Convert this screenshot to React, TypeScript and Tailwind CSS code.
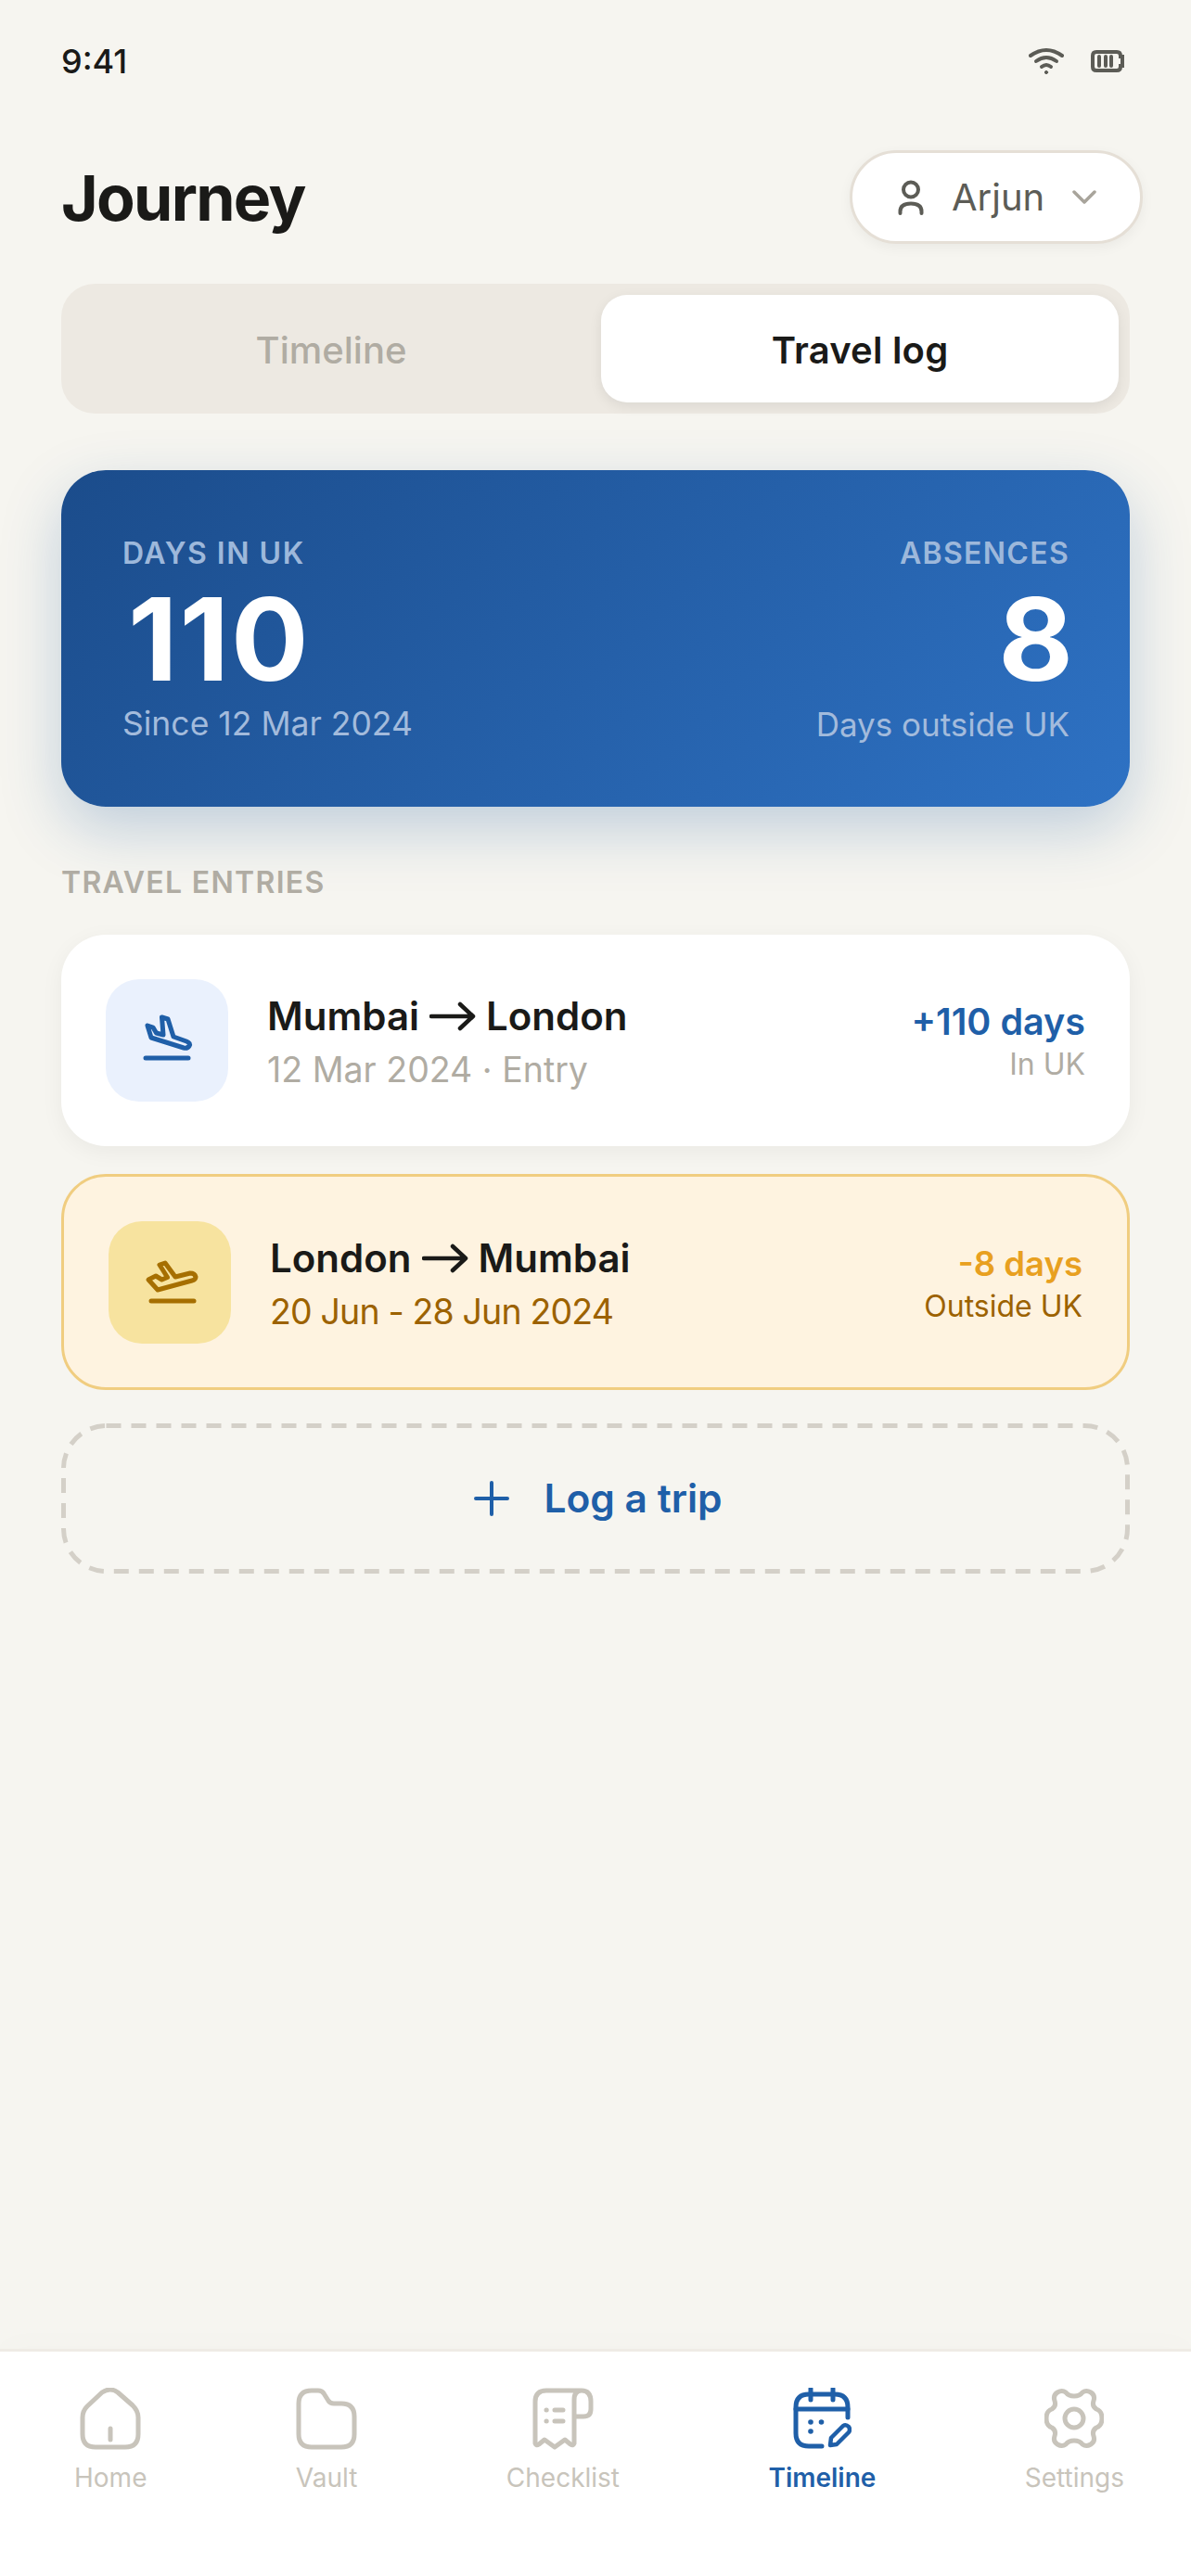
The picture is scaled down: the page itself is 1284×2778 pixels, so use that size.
import React from "react";

const font = { fontFamily: '"Inter", "Liberation Sans", sans-serif' };

function Plane({ color, kind }: { color: string; kind: "land" | "depart" }) {
  return (
    <svg width="80" height="70" viewBox="0 0 80 70" fill="none" stroke={color} strokeWidth="5" strokeLinecap="round" strokeLinejoin="round">
      {kind === "land" ? (
        <>
          <path d="M19 19 L25 21 L28.5 27 L36 29 L34.5 10 L41 12 L47 31 L61 36 Q66 38 64 41 Q62 44 58 43 L23 32 Z" />
          <path d="M17 54 H63" />
        </>
      ) : (
        <>
          <path d="M17 32 L25 28 L31.5 32 L37.5 29.5 L29 16 L35 14 L46 29 L62 25 Q67 25 68 29 Q68 32 64 33 L27 43 Z" />
          <path d="M20 55 H66" />
        </>
      )}
    </svg>
  );
}

function Status() {
  return (
    <div className="flex h-[132px] items-center justify-between pl-[66px] pr-[72px]">
      <span className="text-[36px] font-medium text-[#1a1a18]">9:41</span>
      <div className="flex items-center gap-[29px]">
        <svg width="38" height="30" viewBox="0 0 38 30" fill="none" stroke="#5c5c56" strokeWidth="4" strokeLinecap="round">
          <path d="M2 9 Q19 -3 36 9" />
          <path d="M8 15 Q19 7 30 15" />
          <path d="M14 21 Q19 17 24 21" />
          <circle cx="19" cy="27" r="1.6" fill="#5c5c56" strokeWidth="1" />
        </svg>
        <svg width="36" height="24" viewBox="0 0 36 24" fill="none">
          <path d="M6 2 H28 Q32 2 32 6 V7 H34 V17 H32 V18 Q32 22 28 22 H6 Q2 22 2 18 V6 Q2 2 6 2 Z" stroke="#5c5c56" strokeWidth="4" />
          <path d="M9 7 V17 M16 7 V17 M22 7 V17" stroke="#5c5c56" strokeWidth="4" strokeLinecap="round" />
        </svg>
      </div>
    </div>
  );
}

function Header() {
  return (
    <div className="mt-[30px] flex h-[101px] items-center justify-between pl-[66px] pr-[52px]">
      <h1 className="text-[68px] font-bold tracking-[-1.7px] text-[#1a1a18]">Journey</h1>
      <div className="flex h-[101px] w-[316px] items-center rounded-full border-[3px] border-[#e5dfd6] bg-white pl-[49px] shadow-[0_4px_14px_rgba(0,0,0,0.05)]">
        <svg width="28" height="38" viewBox="0 0 28 38" fill="none" stroke="#5c5c56" strokeWidth="4" strokeLinecap="round">
          <circle cx="14" cy="10.5" r="8" />
          <path d="M2.5 36 V34 Q2.5 25.5 14 25.5 Q25.5 25.5 25.5 34 V36" />
        </svg>
        <span className="ml-[30px] text-[40px] text-[#5c5c56]">Arjun</span>
        <svg width="26" height="16" viewBox="0 0 26 16" fill="none" stroke="#a8a49b" strokeWidth="3.5" strokeLinecap="round" strokeLinejoin="round" className="ml-[30px]">
          <path d="M2 2 L13 13 L24 2" />
        </svg>
      </div>
    </div>
  );
}

function Tabs() {
  return (
    <div className="mx-[66px] mt-[43px] flex h-[140px] items-center rounded-[36px] bg-[#ede9e2] pr-[12px]">
      <div className="flex-1 pt-[3px] text-center text-[40px] font-medium text-[#b0aca3]">Timeline</div>
      <div className="flex h-[116px] w-[558px] items-center justify-center rounded-[28px] bg-white pt-[3px] text-[40px] font-semibold tracking-[0.2px] text-[#1a1a18] shadow-[0_4px_14px_rgba(0,0,0,0.08)]">
        Travel log
      </div>
    </div>
  );
}

function Hero() {
  return (
    <div className="mx-[66px] mt-[61px] flex h-[363px] justify-between rounded-[48px] bg-[linear-gradient(135deg,#1b4c8b_0%,#2e72c4_100%)] pl-[66px] pr-[65px] pt-[70px] shadow-[0_24px_64px_rgba(30,90,160,0.25)]">
      <div className="flex flex-col">
        <span className="text-[32px] leading-[40px] font-semibold tracking-[1.5px] text-[#9db8db]">DAYS IN UK</span>
        <span className="ml-[6px] mt-[12px] text-[124px] leading-[120px] font-bold tracking-[2px] text-white">110</span>
        <span className="mt-[10px] text-[35.5px] leading-[44px] text-[#a3bbdc]">Since 12 Mar 2024</span>
      </div>
      <div className="flex flex-col items-end">
        <span className="text-[32px] leading-[40px] font-semibold tracking-[1.3px] text-[#9db8db]">ABSENCES</span>
        <span className="-mr-[4px] mt-[12px] text-[124px] leading-[120px] font-bold text-white">8</span>
        <span className="mt-[10px] text-[35px] leading-[44px] text-[#a3bbdc]">Days outside UK</span>
      </div>
    </div>
  );
}

function Arrow() {
  return (
    <svg width="50" height="32" viewBox="0 0 50 32" fill="none" stroke="#1a1a18" strokeWidth="4.5" strokeLinecap="round" strokeLinejoin="round" className="mx-[11px]">
      <path d="M2 16 H47 M33 3 L47 16 L33 29" />
    </svg>
  );
}

function Entry({ from, to, sub, value, note, warm, kind }: { from: string; to: string; sub: string; value: string; note: string; warm?: boolean; kind: "land" | "depart" }) {
  return (
    <div
      className={
        warm
          ? "mx-[66px] mt-[30px] flex h-[233px] items-center rounded-[48px] border-[3px] border-[#f0cd80] bg-[#fef3e0] pl-[48px] pr-[48px]"
          : "mx-[66px] flex h-[228px] items-center rounded-[48px] bg-white pl-[48px] pr-[48px] shadow-[0_6px_24px_rgba(0,0,0,0.05)]"
      }
    >
      <div className={warm ? "flex h-[132px] w-[132px] items-center justify-center rounded-[36px] bg-[#f7e39f]" : "flex h-[132px] w-[132px] items-center justify-center rounded-[36px] bg-[#eaf1fd]"}>
        <Plane color={warm ? "#a66f00" : "#1f5fa8"} kind={kind} />
      </div>
      <div className="ml-[42px] flex-1 pt-[4px]">
        <div className="flex items-center text-[42px] leading-[54px] font-semibold text-[#1a1a18]">
          {from}
          <Arrow />
          {to}
        </div>
        <div className={warm ? "mt-[6px] text-[37.5px] leading-[50px] tracking-[-0.85px] text-[#9c6200]" : "mt-[6px] text-[37.5px] leading-[50px] text-[#b0aca3]"}>{sub}</div>
      </div>
      <div className="pt-[3px] text-right">
        <div className={warm ? "text-[36.5px] leading-[48px] font-semibold text-[#e8a020]" : "text-[39.5px] leading-[48px] font-semibold text-[#1f5fa8]"}>{value}</div>
        <div className={warm ? "mt-[1px] text-[32px] leading-[42px] text-[#9c6200]" : "mt-[1px] text-[32px] leading-[42px] text-[#b0aca3]"}>{note}</div>
      </div>
    </div>
  );
}

function LogTrip() {
  return (
    <div className="relative mx-[66px] mt-[36px] flex h-[162px] items-center justify-center gap-[36px] pl-[5px]">
      <svg className="absolute inset-0" width="1152" height="162" viewBox="0 0 1152 162" fill="none">
        <rect x="2.5" y="2.5" width="1147" height="157" rx="46" stroke="#d4d0c8" strokeWidth="5" strokeDasharray="16 11" />
      </svg>
      <svg width="40" height="40" viewBox="0 0 40 40" fill="none" stroke="#1f5fa8" strokeWidth="4" strokeLinecap="round">
        <path d="M20 3 V37 M3 20 H37" />
      </svg>
      <span className="text-[42.5px] font-semibold text-[#1f5fa8]">Log a trip</span>
    </div>
  );
}

function NavItem({ label, active, children }: { label: string; active?: boolean; children: React.ReactNode }) {
  return (
    <div className="flex flex-col items-center">
      <div className="h-[68px]">{children}</div>
      <span className={active ? "mt-[11px] text-[28px] leading-[36px] font-semibold text-[#1f5fa8]" : "mt-[11px] text-[28px] leading-[36px] text-[#c8c4bb]"}>{label}</span>
    </div>
  );
}

function BottomNav() {
  const g = "#c8c4bb";
  return (
    <div className="flex h-[245px] items-start justify-between border-t-[3px] border-[#efebe5] bg-white pl-[80px] pr-[72px] pt-[39px] shadow-[0_-10px_30px_rgba(0,0,0,0.012)]">
      <NavItem label="Home">
        <svg width="66" height="68" viewBox="0 0 66 68" fill="none" stroke={g} strokeWidth="5" strokeLinecap="round" strokeLinejoin="round">
          <path d="M3 32 Q3 25 8 20 L24 5 Q33 -1 41 5 L57 19 Q63 25 63 32 V50 Q63 64 49 64 H17 Q3 64 3 50 Z" />
          <path d="M33 44 V56" />
        </svg>
      </NavItem>
      <NavItem label="Vault">
        <svg width="66" height="68" viewBox="0 0 66 68" fill="none" stroke={g} strokeWidth="5" strokeLinecap="round" strokeLinejoin="round">
          <path d="M3 17 Q3 3 17 3 H24 Q28 3 30 6 L35 14 Q37 17 41 17 H49 Q63 17 63 31 V50 Q63 64 49 64 H17 Q3 64 3 50 Z" />
        </svg>
      </NavItem>
      <NavItem label="Checklist">
        <svg width="66" height="68" viewBox="17 9 66 68" fill="none" stroke={g} strokeWidth="5" strokeLinecap="round" strokeLinejoin="round">
          <path d="M70 12 H32 Q20 12 20 24 V69 Q21 72 24 70 L30 65 L41 73 L52 65 L58 70 Q61 72 62 69 V22 Q62 12 70 12 Q80 12 80 24 V32 Q80 40 72 40 H62" />
          <path d="M32 33 H32.2 M41 33 H50 M32 45 H32.2 M41 45 H50" />
        </svg>
      </NavItem>
      <NavItem label="Timeline" active>
        <svg width="64" height="68" viewBox="16 9 64 68" fill="none" stroke="#1f5fa8" strokeWidth="5" strokeLinecap="round" strokeLinejoin="round">
          <path d="M76 41 V30 Q76 16 62 16 H34 Q20 16 20 30 V58 Q20 72 34 72 H48" />
          <path d="M20 32 H76 M36 10 V22 M60 10 V22" />
          <circle cx="36" cy="46" r="2.8" fill="#1f5fa8" stroke="none" />
          <circle cx="47.5" cy="46" r="2.8" fill="#1f5fa8" stroke="none" />
          <circle cx="36" cy="56" r="2.8" fill="#1f5fa8" stroke="none" />
          <path d="M57 71 L58 63 L71 50 Q74 48 77 51 Q79 54 77 57 L64 70 Z" strokeWidth="4.5" />
        </svg>
      </NavItem>
      <NavItem label="Settings">
        <svg width="64" height="68" viewBox="0 0 64 68" fill="none" stroke={g} strokeWidth="5" strokeLinecap="round" strokeLinejoin="round">
          <circle cx="32" cy="33" r="10" />
          <path d="M32 9 Q26 9 23 5 Q19 2 14 5 Q9 8 11 14 Q13 20 8 23 Q2 25 2 33 Q2 41 8 43 Q13 46 11 52 Q9 58 14 61 Q19 64 23 61 Q26 57 32 57 Q38 57 41 61 Q45 64 50 61 Q55 58 53 52 Q51 46 56 43 Q62 41 62 33 Q62 25 56 23 Q51 20 53 14 Q55 8 50 5 Q45 2 41 5 Q38 9 32 9 Z" />
        </svg>
      </NavItem>
    </div>
  );
}

export default function App() {
  return (
    <div style={font} className="flex h-[2778px] w-[1284px] flex-col bg-[#f6f5f0]">
      <div className="flex-1">
        <Status />
        <Header />
        <Tabs />
        <Hero />
        <div className="mx-[66px] mt-[62px] text-[32px] leading-[40px] font-semibold tracking-[1.3px] text-[#b0aca3]">TRAVEL ENTRIES</div>
        <div className="mt-[36px]">
          <Entry from="Mumbai" to="London" sub="12 Mar 2024 · Entry" value="+110 days" note="In UK" kind="land" />
          <Entry from="London" to="Mumbai" sub="20 Jun - 28 Jun 2024" value="-8 days" note="Outside UK" warm kind="depart" />
          <LogTrip />
        </div>
      </div>
      <BottomNav />
    </div>
  );
}
